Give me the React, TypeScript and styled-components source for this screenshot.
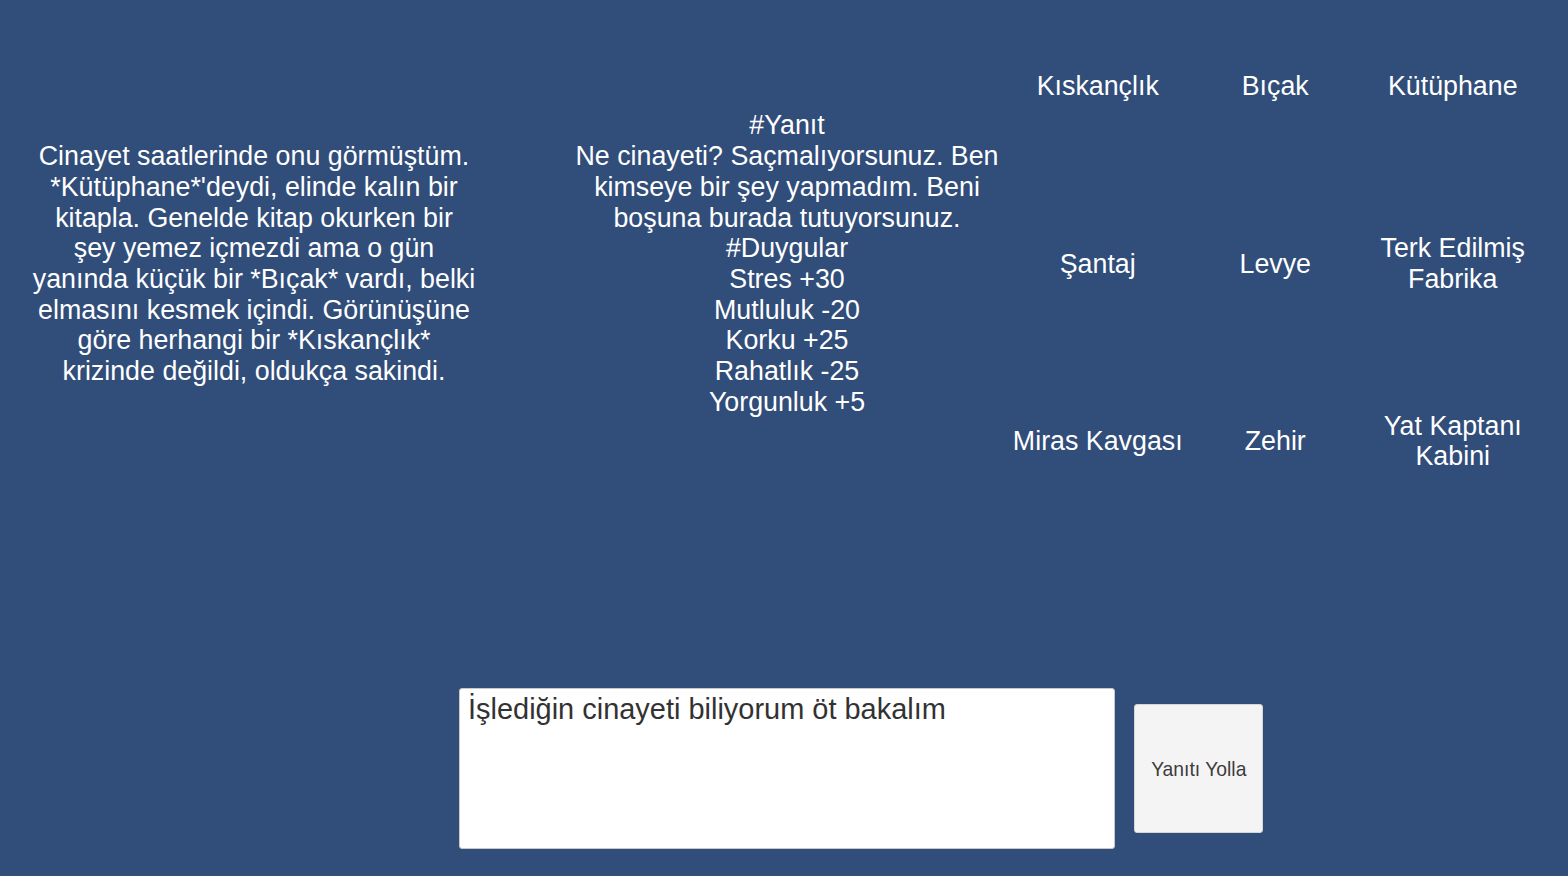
import React from "react";
import styled, { createGlobalStyle } from "styled-components";

const Global = createGlobalStyle`
  html, body { margin: 0; padding: 0; background: #314d79; }
  body { font-family: "Liberation Sans", Arial, sans-serif; }
`;

const Screen = styled.div`
  width: 1568px;
  height: 876px;
  background: #314d79;
  color: #ffffff;
  display: flex;
  flex-direction: column;
  overflow: hidden;
`;

const Top = styled.div`
  height: 532px;
  margin-top: -2px;
  display: flex;
  align-items: center;
`;

const Paragraph = styled.div<{ $width: number; $offset?: number }>`
  width: ${(p) => p.$width}px;
  margin-left: ${(p) => p.$offset ?? 0}px;
  flex-shrink: 0;
  font-size: 26.8px;
  line-height: 30.7px;
  text-align: center;
  white-space: pre-line;
`;

const Choices = styled.div`
  display: grid;
  grid-template-columns: repeat(3, 177.5px);
  grid-template-rows: repeat(3, 177.33px);
  height: 532px;
  flex-shrink: 0;
`;

const Choice = styled.div`
  display: flex;
  align-items: center;
  justify-content: center;
  text-align: center;
  font-size: 26.8px;
  line-height: 30.5px;
  white-space: pre-line;
`;

const Bottom = styled.div`
  margin-top: 158px;
  display: flex;
  align-items: center;
  padding-left: 459px;
  gap: 19px;
`;

const InputBox = styled.div`
  width: 654px;
  height: 159px;
  background: #ffffff;
  border: 1px solid #c8c8c8;
  border-radius: 3px;
  overflow: hidden;
`;

const Placeholder = styled.div`
  display: inline-block;
  color: #323232;
  font-size: 30px;
  line-height: 34px;
  margin: 3px 0 0 8px;
  white-space: nowrap;
  transform: scaleX(0.965);
  transform-origin: left top;
`;

const SendButton = styled.div`
  width: 127px;
  height: 127px;
  background: #f4f4f4;
  border: 1px solid #d6d6d6;
  border-radius: 3px;
  display: flex;
  align-items: center;
  justify-content: center;
  color: #3c3c3c;
  font-size: 21px;
`;

const ButtonLabel = styled.span`
  display: inline-block;
  transform: scaleX(0.92);
`;

const leftText = `Cinayet saatlerinde onu görmüştüm.
*Kütüphane*'deydi, elinde kalın bir
kitapla. Genelde kitap okurken bir
şey yemez içmezdi ama o gün
yanında küçük bir *Bıçak* vardı, belki
elmasını kesmek içindi. Görünüşüne
göre herhangi bir *Kıskançlık*
krizinde değildi, oldukça sakindi.`;

const midText = `#Yanıt
Ne cinayeti? Saçmalıyorsunuz. Ben
kimseye bir şey yapmadım. Beni
boşuna burada tutuyorsunuz.
#Duygular
Stres +30
Mutluluk -20
Korku +25
Rahatlık -25
Yorgunluk +5`;

const choices = [
  "Kıskançlık",
  "Bıçak",
  "Kütüphane",
  "Şantaj",
  "Levye",
  "Terk Edilmiş\nFabrika",
  "Miras Kavgası",
  "Zehir",
  "Yat Kaptanı\nKabini",
];

export default function App() {
  return (
    <>
      <Global />
      <Screen>
        <Top>
          <Paragraph $width={508}>{leftText}</Paragraph>
          <Paragraph $width={444} $offset={57}>
            {midText}
          </Paragraph>
          <Choices>
            {choices.map((c) => (
              <Choice key={c}>{c}</Choice>
            ))}
          </Choices>
        </Top>
        <Bottom>
          <InputBox>
            <Placeholder>İşlediğin cinayeti biliyorum öt bakalım</Placeholder>
          </InputBox>
          <SendButton>
            <ButtonLabel>Yanıtı Yolla</ButtonLabel>
          </SendButton>
        </Bottom>
      </Screen>
    </>
  );
}
